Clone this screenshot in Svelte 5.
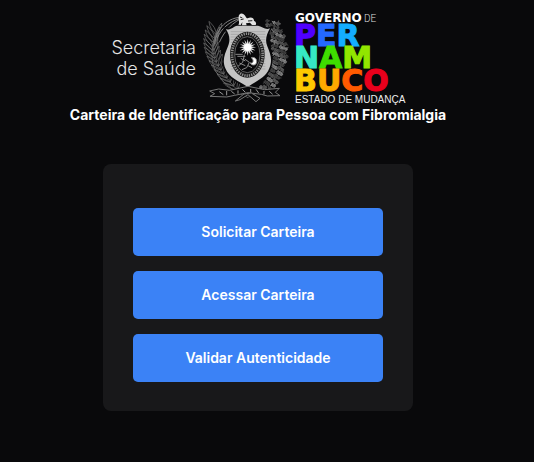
<script lang="ts">
	const actions = ['Solicitar Carteira', 'Acessar Carteira', 'Validar Autenticidade'];

	// sugar cane leaves on the left side of the crest
	const cane = Array.from({ length: 15 }, (_, i) => {
		const t = i / 14;
		return {
			x: 118 - Math.sin(t * 2.1) * 72,
			y: 254 - t * 165,
			inner: 12 + t * 12,
			outer: -64 + t * 34
		};
	});

	// cotton bolls and leaves on the right side
	const cotton = Array.from({ length: 96 }, (_, i) => {
		const t = i / 95;
		const spread = ((i * 37) % 29) - 14;
		return {
			x: 206 + Math.sin(0.1 + t * 2.7) * 40 + spread * 1.5,
			y: 246 - t * 200 + ((i * 13) % 9),
			r: 4 + ((i * 5) % 5),
			turn: (i * 71) % 360,
			shade: ['#8a8a8a', '#5c5c5c', '#474747'][i % 3]
		};
	});

	const rays = Array.from({ length: 16 }, (_, i) => i * 22.5);
	const hatching = Array.from({ length: 15 }, (_, i) => 80 + i * 8);
</script>

<main>
	<svg class="logo" viewBox="0 0 300 95" role="img" aria-label="Secretaria de Saúde, Governo de Pernambuco">
		<g class="office">
			<text x="88" y="44">Secretaria</text>
			<text x="88" y="65">de Saúde</text>
		</g>

		<g transform="translate(90 -5) scale(0.3333)">
			<g class="leaves">
				{#each cane as leaf}
					<g transform="translate({leaf.x} {leaf.y})">
						<path d="M0 0C-7 -14 -7 -30 0 -46C6 -30 6 -14 0 0Z" transform="rotate({leaf.outer})" />
						<path d="M0 0C-5 -12 -5 -26 0 -38C5 -26 5 -12 0 0Z" transform="rotate({leaf.inner})" />
					</g>
				{/each}
				<path d="M150 278C108 258 58 230 44 174C40 144 42 118 54 92" />
			</g>
			<path class="blade" d="M50 118C54 70 88 36 138 36C104 52 80 76 64 112M58 100C68 72 94 50 126 40" />

			<path class="leaves" d="M148 278C200 256 238 222 250 174C256 134 248 88 218 54" />
			{#each cotton as c}
				<g transform="translate({c.x} {c.y}) rotate({c.turn})" stroke={c.shade} stroke-width="2.5">
					<circle r={c.r} fill="#09090b" />
					<path d="M{-c.r} 2Q0 -5 {c.r} 2M0 0V{c.r + 5}" />
				</g>
			{/each}

			<!-- shield -->
			<path
				class="shield"
				d="M84 73C98 76 106 64 118 62H180C192 64 202 76 216 70C206 88 200 104 208 124C218 148 224 166 214 190C202 220 174 228 149 246C122 228 94 220 82 190C72 166 80 148 90 124C98 104 94 88 84 73Z"
			/>
			<g class="hatching">
				{#each hatching as y}
					<path d="M98 {y}H202" />
				{/each}
			</g>
			<ellipse cx="148" cy="149" rx="52" ry="69" fill="#151515" />
			<ellipse class="rope" cx="148" cy="149" rx="46" ry="63" />
			<ellipse cx="148" cy="149" rx="38" ry="54" fill="#08080a" stroke="#888" stroke-width="2" />

			<!-- sun, coast and hills -->
			<g transform="translate(149 127)">
				{#each rays as angle}
					<path d="M-3 -9L0 -25L3 -9Z" fill="#ddd" transform="rotate({angle})" />
				{/each}
				<circle r="11" fill="#fff" />
			</g>
			<g class="scene">
				<path d="M112 148H134M118 154H142M139 150L134 172L120 184M140 162L154 172L146 188L132 194M124 174L142 182M150 182L162 188M128 160L142 168" />
				<path d="M160 158C172 154 180 166 174 176C170 183 158 180 157 173C164 178 170 166 160 158Z" fill="#fff" />
			</g>

			<!-- lion -->
			<path
				class="lion"
				d="M121 59C126 54 121 46 122 38C121 27 130 22 137 28C144 33 143 40 149 40C158 35 168 38 168 47C174 50 176 56 173 60H162L156 53L144 55L146 61H132L133 51L128 60Z"
			/>
			<path d="M126 36L133 39M128 44L137 42M150 48L163 47" stroke="#222" stroke-width="3" />

			<!-- ribbon -->
			<path
				class="ribbon"
				d="M35 258L62 252L95 256L150 244L200 254L244 250L232 262L246 272L208 273L190 268L150 263L110 271L86 276L36 274L50 266Z"
			/>
			<path
				d="M64 260L76 269M86 258V271M100 259L110 267M120 256V266M133 253L142 262M158 252V262M174 253L182 264M198 258V268M214 259L224 268"
				stroke="#999"
				stroke-width="3"
			/>
			<path class="ribbon" d="M138 267L112 288L126 284L150 269L174 290L186 280L160 264Z" />
		</g>

		<text class="government" x="187" y="12">GOVERNO</text>
		<text class="of" x="256" y="12">DE</text>
		<g class="state">
			<text x="186" y="36"><tspan class="violet">P</tspan><tspan class="blue">E</tspan><tspan class="sky">R</tspan></text>
			<text x="186" y="58"><tspan class="teal">N</tspan><tspan class="green">A</tspan><tspan class="lime">M</tspan></text>
			<text x="186" y="81"><tspan class="yellow">B</tspan><tspan class="amber">U</tspan><tspan class="orange">C</tspan><tspan class="red">O</tspan></text>
		</g>
		<text class="slogan" x="187" y="93">ESTADO DE MUDANÇA</text>
	</svg>

	<h1>Carteira de Identificação para Pessoa com Fibromialgia</h1>

	<section class="card">
		{#each actions as action}
			<button type="button">{action}</button>
		{/each}
	</section>
</main>

<style>
	:global(body) {
		background: #09090b;
	}

	main {
		display: flex;
		flex-direction: column;
		align-items: center;
		padding: 10px 18px 50px 0;
		font-family: Inter, 'Liberation Sans', sans-serif;
		color: #fff;
	}

	.logo {
		width: 300px;
		max-width: 100%;
		fill: none;
	}

	.office {
		font-size: 18px;
		font-weight: 300;
		fill: #e4e4e4;
		text-anchor: end;
	}

	.leaves {
		stroke: #6c6c6c;
		stroke-width: 2;
	}

	.blade {
		stroke: #858585;
		stroke-width: 3;
	}

	.shield {
		fill: #c4c4c4;
		stroke: #09090b;
		stroke-width: 9;
		paint-order: stroke;
	}

	.hatching {
		stroke: #9c9c9c;
		stroke-width: 2;
	}

	.rope {
		stroke: #8c8c8c;
		stroke-width: 8;
		stroke-dasharray: 4 3;
	}

	.scene {
		stroke: #8a8a8a;
		stroke-width: 3;
	}

	.lion {
		fill: #e2e2e2;
	}

	.ribbon {
		fill: #09090b;
		stroke: #777;
		stroke-width: 3;
	}

	.government,
	.state {
		font-family: 'DejaVu Sans', sans-serif;
		font-weight: 700;
	}

	.government {
		font-size: 12px;
		fill: #fff;
	}

	.of {
		font-family: 'Liberation Sans Narrow', Roboto, sans-serif;
		font-size: 10px;
		font-weight: 300;
		fill: #ddd;
	}

	.state {
		font-size: 30px;
		stroke-width: 1;
	}

	.slogan {
		font-family: 'Liberation Sans', sans-serif;
		font-size: 10px;
		fill: #eee;
	}

	.violet {
		fill: #5000ff;
		stroke: #5000ff;
	}
	.blue {
		fill: #2468ff;
		stroke: #2468ff;
	}
	.sky {
		fill: #14adff;
		stroke: #14adff;
	}
	.teal {
		fill: #36e8c4;
		stroke: #36e8c4;
	}
	.green {
		fill: #3fdc00;
		stroke: #3fdc00;
	}
	.lime {
		fill: #92e600;
		stroke: #92e600;
	}
	.yellow {
		fill: #ffc800;
		stroke: #ffc800;
	}
	.amber {
		fill: #ffa800;
		stroke: #ffa800;
	}
	.orange {
		fill: #ff5a00;
		stroke: #ff5a00;
	}
	.red {
		fill: #e9001c;
		stroke: #e9001c;
	}

	h1 {
		margin: 0 0 39px;
		font-size: 14px;
		font-weight: 700;
		line-height: 20px;
		text-align: center;
	}

	.card {
		display: flex;
		flex-direction: column;
		gap: 15px;
		box-sizing: border-box;
		width: 60%;
		min-width: 280px;
		max-width: 480px;
		padding: 44px 30px 29px;
		border-radius: 8px;
		background: #18181a;
	}

	button {
		padding: 14px;
		border: 0;
		border-radius: 5px;
		background: #3b82f6;
		color: #fff;
		font: inherit;
		font-size: 14px;
		font-weight: 600;
		line-height: 20px;
		cursor: pointer;
	}

	button:hover {
		background: #2563eb;
	}
</style>
